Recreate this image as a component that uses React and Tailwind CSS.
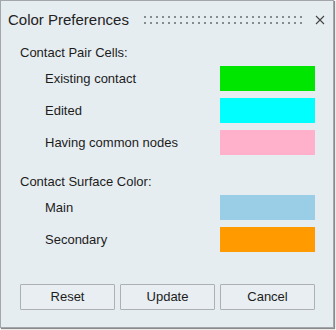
import React from "react";

const rowsA = [
  ["Existing contact", "bg-[#00e600]"],
  ["Edited", "bg-[#00ffff]"],
  ["Having common nodes", "bg-[#ffb1cb]"],
];
const rowsB = [
  ["Main", "bg-[#9acde6]"],
  ["Secondary", "bg-[#ff9a00]"],
];

function Grip() {
  const dots = [];
  for (let i = 0; i < 27; i++) {
    dots.push(<rect key={"a" + i} x={i * 6} y={0} width="2" height="2" fill="#858b91" />);
    dots.push(<rect key={"b" + i} x={i * 6} y={6} width="2" height="2" fill="#858b91" />);
  }
  return (
    <svg width="158" height="8" viewBox="0 0 158 8" className="block">
      {dots}
    </svg>
  );
}

function Row({ label, color, first }) {
  return (
    <div className={`flex h-[25px] items-center justify-between pl-[25px] ${first ? "" : "mt-[7px]"}`}>
      <span>{label}</span>
      <div className={`w-[95px] h-[25px] ${color}`} />
    </div>
  );
}

export default function App() {
  return (
    <div className="w-[336px] h-[330px] bg-white" style={{ fontFamily: '"Liberation Sans", Arial, sans-serif' }}>
      <div className="relative w-[334px] h-[328px] border border-[#a3a7ab] bg-[#e6edf1] shadow-[1px_1px_1px_#8a8a8a] text-[13px] text-[#1c1c1c]">
        <div className="relative h-[38px] flex items-center pl-[7px]">
          <span className="text-[15px] text-[#222]">Color Preferences</span>
          <div className="absolute left-[143px] top-[15px]">
            <Grip />
          </div>
          <svg className="absolute left-[314px] top-[14px]" width="10" height="10" viewBox="0 0 10 10">
            <path d="M1 1 L9 9 M9 1 L1 9" stroke="#454545" strokeWidth="1.1" />
          </svg>
        </div>
        <div className="ml-[19px] w-[295px]">
          <div className="h-[27px] flex items-center">Contact Pair Cells:</div>
          {rowsA.map((r, i) => (
            <Row key={r[0]} label={r[0]} color={r[1]} first={i === 0} />
          ))}
          <div className="mt-[13px] h-[27px] flex items-center">Contact Surface Color:</div>
          {rowsB.map((r, i) => (
            <Row key={r[0]} label={r[0]} color={r[1]} first={i === 0} />
          ))}
          <div className="mt-[32px] flex gap-[5px]">
            {["Reset", "Update", "Cancel"].map((b) => (
              <button
                key={b}
                className="w-[95px] h-[26px] border border-[#acb0b4] bg-[#e8eef1] rounded-[1px] text-[13px] text-[#1c1c1c] flex items-center justify-center"
              >
                {b}
              </button>
            ))}
          </div>
        </div>
      </div>
    </div>
  );
}
